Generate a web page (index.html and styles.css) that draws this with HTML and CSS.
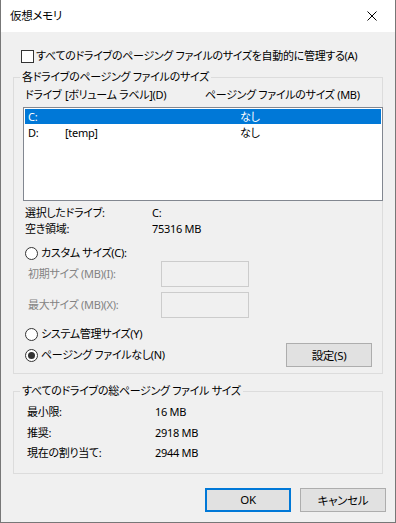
FILE: index.html
```html
<!DOCTYPE html>
<html lang="ja">
<head>
    <meta charset="UTF-8">
    <meta name="viewport" content="width=device-width, initial-scale=1.0">
    <title>仮想メモリ</title>
    <link rel="stylesheet" href="styles.css">
</head>
<body>
    <div class="window">
        <div class="titlebar">
            <span class="title">仮想メモリ</span>
            <svg class="close-icon" width="10" height="10" viewBox="0 0 10 10">
                <path d="M0.5 0.5 L9.5 9.5 M9.5 0.5 L0.5 9.5" stroke="#000" stroke-width="1" fill="none"/>
            </svg>
        </div>

        <div class="dialog">
            <div class="check-row">
                <span class="checkbox"></span>
                <span>すべてのドライブのページング ファイルのサイズを自動的に管理する(A)</span>
            </div>

            <fieldset class="group group-drives">
                <legend>各ドライブのページング ファイルのサイズ</legend>
                <div class="group-inner">
                    <div class="list-head">
                        <span class="col-drive">ドライブ</span>
                        <span class="col-label">[ボリューム ラベル](D)</span>
                        <span class="col-size">ページング ファイルのサイズ (MB)</span>
                    </div>
                    <div class="listbox">
                        <div class="list-row selected">
                            <span class="cell-drive">C:</span>
                            <span class="cell-label"></span>
                            <span class="cell-size">なし</span>
                        </div>
                        <div class="list-row">
                            <span class="cell-drive">D:</span>
                            <span class="cell-label">[temp]</span>
                            <span class="cell-size">なし</span>
                        </div>
                    </div>

                    <div class="info">
                        <div class="info-row"><span class="info-key">選択したドライブ:</span><span>C:</span></div>
                        <div class="info-row"><span class="info-key">空き領域:</span><span>75316 MB</span></div>
                    </div>

                    <div class="radio-row custom">
                        <span class="radio"></span>
                        <span>カスタム サイズ(C):</span>
                    </div>
                    <div class="size-row first">
                        <span class="size-label">初期サイズ (MB)(I):</span>
                        <span class="textbox"></span>
                    </div>
                    <div class="size-row">
                        <span class="size-label">最大サイズ (MB)(X):</span>
                        <span class="textbox"></span>
                    </div>

                    <div class="bottom-row">
                        <div class="radios">
                            <div class="radio-row">
                                <span class="radio"></span>
                                <span>システム管理サイズ(Y)</span>
                            </div>
                            <div class="radio-row">
                                <span class="radio checked"><span class="dot"></span></span>
                                <span>ページング ファイルなし(N)</span>
                            </div>
                        </div>
                        <button class="btn btn-set">設定(S)</button>
                    </div>
                </div>
            </fieldset>

            <fieldset class="group group-total">
                <legend>すべてのドライブの総ページング ファイル サイズ</legend>
                <div class="group-inner">
                    <div class="total-row"><span class="total-key">最小限:</span><span>16 MB</span></div>
                    <div class="total-row"><span class="total-key">推奨:</span><span>2918 MB</span></div>
                    <div class="total-row"><span class="total-key">現在の割り当て:</span><span>2944 MB</span></div>
                </div>
            </fieldset>

            <div class="dialog-buttons">
                <button class="btn btn-default">OK</button>
                <button class="btn">キャンセル</button>
            </div>
        </div>
    </div>
</body>
</html>
```

FILE: styles.css
```css
body {
    margin: 0;
    font-family: "Noto Sans", "Noto Sans CJK JP", sans-serif;
    font-size: 11px;
    line-height: 16px;
    letter-spacing: -0.3px;
    color: #000;
    font-feature-settings: "palt";
    white-space: nowrap;
}
.window {
    box-sizing: border-box;
    width: 396px;
    height: 523px;
    background-color: #f0f0f0;
    border: 1px solid #777;
    border-top: none;
}
.titlebar {
    height: 31px;
    background-color: #fff;
    display: flex;
    align-items: center;
    padding: 0 9px 1px 9px;
    font-size: 11.5px;
}
.title {
    flex: 1;
}
.close-icon {
    display: block;
    margin-right: 9px;
}
.dialog {
    padding: 16px 12px 0 12px;
}

/* checkbox + radios */
.check-row {
    display: flex;
    align-items: center;
    height: 16px;
    margin-left: 8px;
}
.checkbox {
    box-sizing: border-box;
    width: 13px;
    height: 13px;
    border: 1px solid #333;
    background-color: #fff;
    margin-right: 2px;
}
.radio-row {
    display: flex;
    align-items: center;
    height: 16px;
}
.radio {
    box-sizing: border-box;
    width: 13px;
    height: 13px;
    border: 1px solid #333;
    border-radius: 50%;
    background-color: #fff;
    margin-right: 3px;
    display: flex;
    align-items: center;
    justify-content: center;
}
.radio .dot {
    width: 7px;
    height: 7px;
    border-radius: 50%;
    background-color: #333;
}

/* group boxes */
.group {
    margin: 5px 0 0 0;
    padding: 0;
    border: 1px solid #dcdcdc;
    min-width: 0;
}
.group legend {
    margin-left: 6px;
    padding: 0 2px;
    line-height: 16px;
}
.group-inner {
    padding: 2px 0 6px 11px;
}

.list-head {
    display: flex;
    height: 16px;
}
.col-drive {
    width: 40px;
}
.col-label {
    width: 140px;
}
.listbox {
    box-sizing: border-box;
    width: 360px;
    height: 94px;
    margin: 4px 0 0 -2px;
    padding: 1px;
    border: 1px solid #828790;
    background-color: #fff;
}
.list-row {
    display: flex;
    height: 15px;
    line-height: 15px;
    margin-bottom: 1px;
    padding-left: 3px;
}
.list-row.selected {
    background-color: #0078d7;
    color: #fff;
}
.cell-drive {
    width: 37px;
}
.cell-label {
    width: 175px;
}

.info {
    margin-top: 4px;
}
.info-row {
    display: flex;
    height: 16px;
}
.info-key {
    width: 127px;
}

.radio-row.custom {
    margin-top: 8px;
}
.size-row {
    display: flex;
    align-items: center;
    margin-top: 5px;
    padding-left: 3px;
}
.size-row.first {
    margin-top: 0;
}
.size-label {
    width: 133px;
    color: #838383;
}
.textbox {
    box-sizing: border-box;
    width: 88px;
    height: 26px;
    border: 1px solid #cccccc;
    background-color: #f0f0f0;
}

.bottom-row {
    display: flex;
    align-items: flex-start;
    margin-top: 8px;
}
.radios {
    display: flex;
    flex-direction: column;
    gap: 5px;
    width: 261px;
}

/* buttons */
.btn {
    box-sizing: border-box;
    width: 86px;
    height: 24px;
    padding: 0;
    font-family: inherit;
    font-size: 11.5px;
    letter-spacing: -0.3px;
    font-feature-settings: "palt";
    color: #000;
    background-color: #e1e1e1;
    border: 1px solid #adadad;
}
.btn-set {
    margin-top: 17px;
}
.btn-default {
    border: 2px solid #0078d7;
}

.group-total {
    margin-top: 9px;
}
.group-total .group-inner {
    padding: 3px 0 9px 13px;
}
.total-row {
    display: flex;
    height: 20.5px;
    line-height: 20.5px;
}
.total-key {
    width: 128px;
}

.dialog-buttons {
    display: flex;
    justify-content: flex-end;
    gap: 9px;
    margin-top: 14px;
    margin-right: -3px;
}
```
